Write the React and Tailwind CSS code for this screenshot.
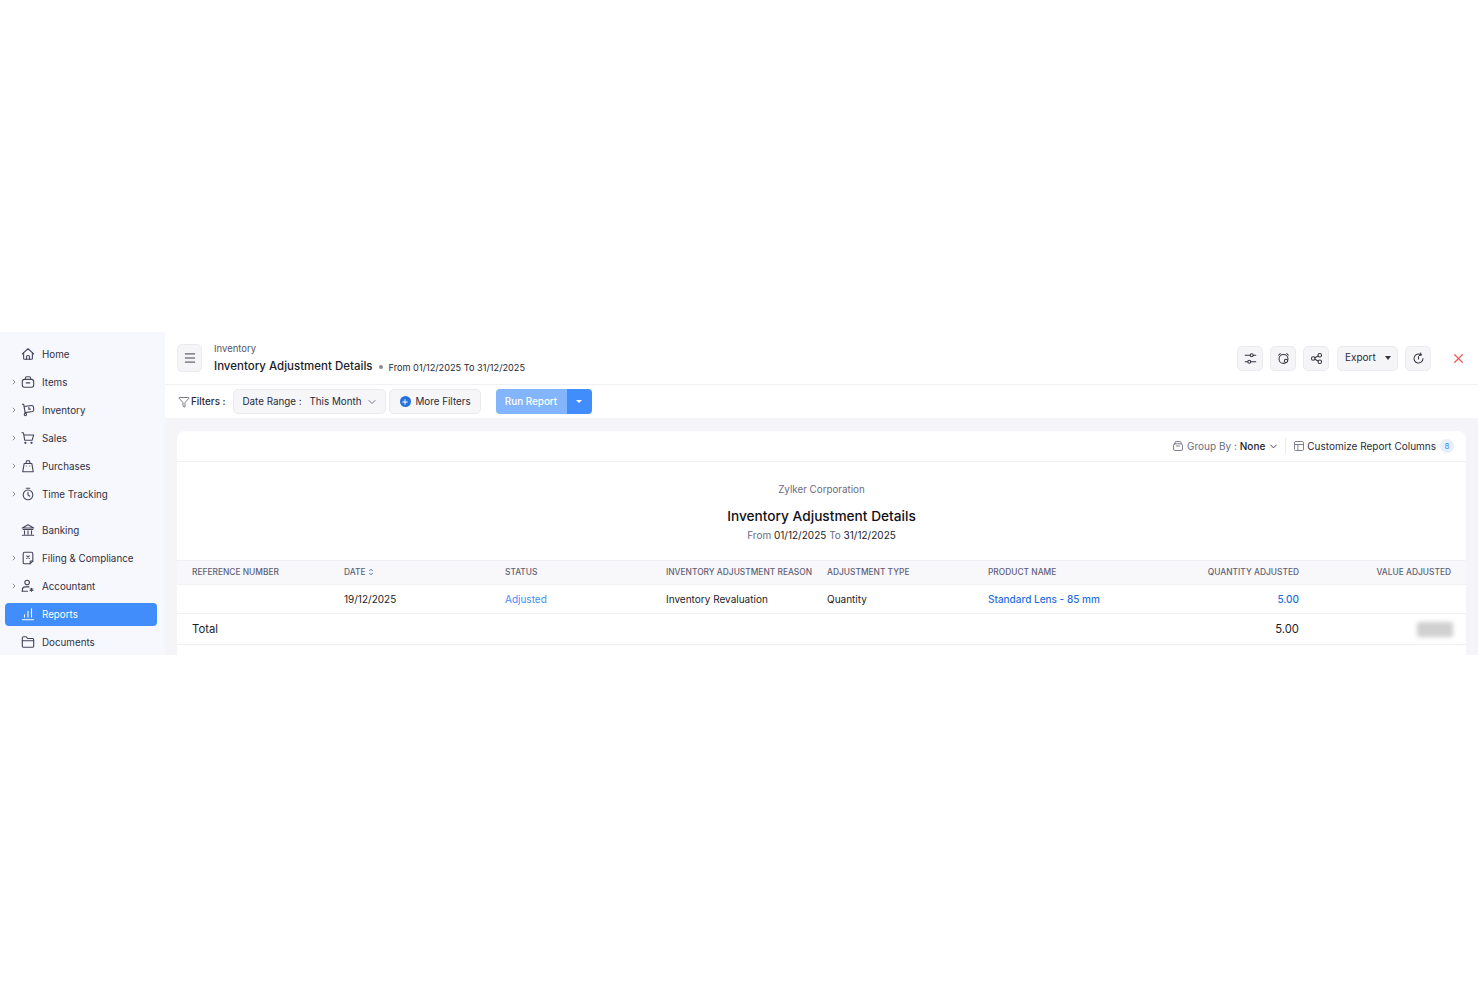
import React from "react";
import { ChevronRight, ChevronDown, Menu, X, Funnel, Plus } from "lucide-react";

const S = ({ children, className = "w-4 h-4", sw = 1.25 }) => (
  <svg viewBox="0 0 16 16" fill="none" stroke="currentColor" strokeWidth={sw} strokeLinecap="round" strokeLinejoin="round" className={className}>
    {children}
  </svg>
);

const icons = {
  home: <><path d="M1.5 7.8 8 2l6.5 5.8" /><path d="M3 6.8V13a1 1 0 0 0 1 1h8a1 1 0 0 0 1-1V6.8" /><path d="M6.3 14v-2.6a1.7 1.7 0 0 1 3.4 0V14" /></>,
  items: <><rect x="1.5" y="5" width="13" height="9" rx="2.5" /><path d="M5 5V3.6A1.6 1.6 0 0 1 6.6 2h2.8A1.6 1.6 0 0 1 11 3.6V5" /><path d="M6 9h4" /></>,
  inventory: <><path d="M1.5 1.5h1.6l1.6 9.5" /><path d="M3.8 4 12 2.8a2 2 0 0 1 2.2 1.7l.4 3a2 2 0 0 1-1.5 2.2L4.7 11" /><circle cx="5" cy="13.2" r="1.3" /><path d="M9 5v2h1.6" /></>,
  sales: <><path d="M1 2h1.8l1.4 8.5h8.6L14.5 4.5H3.3" /><circle cx="5" cy="13.5" r=".7" /><circle cx="12" cy="13.5" r=".7" /></>,
  purchases: <><path d="M3.6 5.2h8.8L14 14.5H2z" /><path d="M5.5 5.2 6.5 2h3l1 3.2" /><path d="M6 8h.01M10 8h.01" /></>,
  time: <><circle cx="8" cy="9" r="5.5" /><path d="M6 1.5h4M8 6v3l2 1.5" /></>,
  banking: <><path d="M1.5 5.8 8 2l6.5 3.8z" /><path d="M2.5 7.5h11M4 9v3.5M8 9v3.5M12 9v3.5M1.5 14h13" /></>,
  filing: <><path d="M10.5 14.5H4a1.5 1.5 0 0 1-1.5-1.5V3A1.5 1.5 0 0 1 4 1.5h8A1.5 1.5 0 0 1 13.5 3v8.5z" /><path d="M10.5 14.5V12a.5.5 0 0 1 .5-.5h2.5" /><path d="m6.5 5.5 3 3M9.5 5.5l-3 3" /></>,
  accountant: <><circle cx="7" cy="4" r="2.6" /><path d="M1.5 14v-1.5A3.5 3.5 0 0 1 5 9h4" /><path d="M1.5 14h6" /><path d="M12 10.5v3.4M10.4 11.3l3.2 1.8M13.6 11.3l-3.2 1.8" /></>,
  reports: <><path d="M1.5 14.5h13M4 11.5V9M8 11.5V5M12 11.5V2" /></>,
  documents: <><path d="M1.5 12.5v-9A1.5 1.5 0 0 1 3 2h3l1.5 2H13a1.5 1.5 0 0 1 1.5 1.5v7A1.5 1.5 0 0 1 13 14H3a1.5 1.5 0 0 1-1.5-1.5z" /><path d="M1.5 6.5h13" /></>,
};

const nav = [
  { label: "Home", icon: "home", h: "h-[27px]" },
  { label: "Items", icon: "items", arrow: true, h: "h-[29px]" },
  { label: "Inventory", icon: "inventory", arrow: true, h: "h-[28px]" },
  { label: "Sales", icon: "sales", arrow: true, h: "h-[28px]" },
  { label: "Purchases", icon: "purchases", arrow: true, h: "h-[28px]" },
  { label: "Time Tracking", icon: "time", arrow: true, h: "h-[28px] mb-2" },
  { label: "Banking", icon: "banking", h: "h-[28px]" },
  { label: "Filing & Compliance", icon: "filing", arrow: true, h: "h-[28px]" },
  { label: "Accountant", icon: "accountant", arrow: true, h: "h-[28px]" },
  { label: "Reports", icon: "reports", active: true, h: "h-[28px]" },
  { label: "Documents", icon: "documents", h: "h-[28px]" },
];

const Sidebar = () => (
  <aside className="w-[165px] shrink-0 bg-[#f7f8fe] pt-[8px] px-[5px] text-[#2f2f3f]">
    {nav.map((n) => (
      <div key={n.label} className={`${n.h} flex items-center`}>
        <div className={`w-[152px] h-[23px] rounded-[4px] flex items-center relative ${n.active ? "bg-[#408dfb] text-white" : ""}`}>
          {n.arrow && <ChevronRight className="absolute left-[5px] w-[8px] h-[8px] text-[#666]" strokeWidth={2.2} />}
          <span className="ml-[16px] w-[21px] flex justify-start">
            <S className={`w-[14px] h-[14px] ${n.active ? "text-white" : "text-[#45455a]"}`}>{icons[n.icon]}</S>
          </span>
          <span className="mt-[3px] text-[9.8px] font-normal whitespace-nowrap">{n.label}</span>
        </div>
      </div>
    ))}
  </aside>
);

const IconBtn = ({ children }) => (
  <button className="w-[26px] h-[25px] rounded-[5px] bg-[#f5f5f7] border border-[#ebebef] flex items-center justify-center text-[#33333f]">
    {children}
  </button>
);

const Header = () => (
  <div className="h-[53px] shrink-0 border-b border-[#f1f1f5] flex items-center pl-3 pr-[12px]">
    <button className="w-[25px] h-[28px] rounded-[5px] bg-[#f5f5f7] border border-[#ebebef] flex items-center justify-center text-[#33333f]">
      <Menu className="w-[14px] h-[14px]" strokeWidth={1.6} />
    </button>
    <div className="ml-3 flex flex-col pt-[2px]">
      <span className="text-[9.5px] leading-[13px] text-[#55556a]">Inventory</span>
      <div className="flex items-center mt-[3px] h-[18px]">
        <span className="text-[11.5px] font-medium text-[#1d1d28] whitespace-nowrap">Inventory Adjustment Details</span>
        <span className="ml-[6px] w-[4px] h-[4px] rounded-full bg-[#8b8b98]" />
        <span className="ml-[6px] text-[9.2px] text-[#2a2a35] mt-[1px] whitespace-nowrap">From 01/12/2025 To 31/12/2025</span>
      </div>
    </div>
    <div className="ml-auto flex items-center">
      <IconBtn>
        <S className="w-[13px] h-[13px]"><path d="M1.5 4h6M11.5 4h3M1.5 12h3M8.5 12h6" /><circle cx="9.5" cy="4" r="1.8" /><circle cx="6.5" cy="12" r="1.8" /></S>
      </IconBtn>
      <span className="w-[7px]" />
      <IconBtn>
        <S className="w-[13px] h-[13px]"><circle cx="8" cy="8.5" r="5.5" /><path d="m2 4 2-2M14 4l-2-2" /><circle cx="11" cy="11" r="2" fill="#f5f5f7" /></S>
      </IconBtn>
      <span className="w-[7px]" />
      <IconBtn>
        <S className="w-[13px] h-[13px]"><circle cx="4" cy="8" r="2.2" /><circle cx="12" cy="4" r="2.2" /><circle cx="12" cy="12" r="2.2" /><path d="m6 7 4-2M6 9l4 2" /></S>
      </IconBtn>
      <span className="w-[8px]" />
      <button className="w-[61px] h-[25px] rounded-[5px] bg-[#f5f5f7] border border-[#ebebef] flex items-center pl-[7px] pb-[1px] text-[10px] text-[#2a2a35]">
        Export
        <span className="ml-[9px] w-0 h-0 border-x-[3px] border-x-transparent border-t-[4px] border-t-[#33333f]" />
      </button>
      <span className="w-[7px]" />
      <IconBtn>
        <S className="w-[13px] h-[13px]"><path d="M13.5 8A5.5 5.5 0 1 1 11 3.4" /><path d="M10.5 1.2 11.5 3.6 9 4.4M8 5.5V8.5" /></S>
      </IconBtn>
      <X className="ml-[20px] w-[15px] h-[15px] text-[#ee5a5a]" strokeWidth={2} />
    </div>
  </div>
);

const Filters = () => (
  <div className="h-[33px] shrink-0 flex items-center pl-[13px] whitespace-nowrap">
    <Funnel className="w-[12px] h-[12px] text-[#33333f]" strokeWidth={1.3} />
    <span className="ml-[1px] mt-[1px] text-[9.8px] font-medium text-[#2a2a35]">Filters :</span>
    <div className="ml-[7px] w-[153px] h-[25px] rounded-[5px] bg-[#f6f6f9] border border-[#ebebef] flex items-center pl-[9px] pt-[1px] text-[9.8px] text-[#2a2a35]">
      <span>Date Range :</span>
      <span className="ml-[8px]">This Month</span>
      <ChevronDown className="ml-[5px] w-[12px] h-[12px] text-[#55556a]" strokeWidth={1.6} />
    </div>
    <div className="ml-[3px] w-[92px] h-[25px] rounded-[5px] bg-[#f6f6f9] border border-[#ebebef] flex items-center pl-[10px] text-[9.8px] text-[#2a2a35]">
      <span className="w-[11px] h-[11px] rounded-full bg-[#2470dc] flex items-center justify-center">
        <Plus className="w-[8px] h-[8px] text-white" strokeWidth={3} />
      </span>
      <span className="ml-[5px] mt-[1px]">More Filters</span>
    </div>
    <div className="ml-[15px] h-[25px] flex rounded-[4px] overflow-hidden text-white">
      <button className="w-[71px] bg-[#82b5fd] text-[9.9px] font-medium">Run Report</button>
      <button className="w-[25px] bg-[#408dfb] flex items-center justify-center">
        <span className="w-0 h-0 border-x-[3px] border-x-transparent border-t-[3px] border-t-white" />
      </button>
    </div>
  </div>
);

const columns = [
  { label: "REFERENCE NUMBER", w: "w-[167px]", pl: "pl-[15px]" },
  { label: "DATE", w: "w-[161px]", sort: true },
  { label: "STATUS", w: "w-[161px]" },
  { label: "INVENTORY ADJUSTMENT REASON", w: "w-[161px]" },
  { label: "ADJUSTMENT TYPE", w: "w-[161px]" },
  { label: "PRODUCT NAME", w: "w-[161px]" },
  { label: "QUANTITY ADJUSTED", w: "w-[150px]", right: true },
  { label: "VALUE ADJUSTED", w: "w-[152px]", right: true },
];

const Cell = ({ w, right, pl, children, className = "" }) => (
  <div className={`${w} ${pl || ""} ${right ? "text-right" : ""} whitespace-nowrap ${className}`}>{children}</div>
);

const Report = () => (
  <div className="mx-3 mt-[13px] bg-white rounded-t-[8px] flex-1">
    <div className="h-[31px] border-b border-[#f1f1f5] flex items-center justify-end pr-[12px] text-[10px] whitespace-nowrap">
      <S className="w-[12px] h-[12px] text-[#77778a]"><rect x="2" y="5" width="12" height="9" rx="2" /><path d="M4 5V3.5A1.5 1.5 0 0 1 5.5 2h5A1.5 1.5 0 0 1 12 3.5V5M6 8h4" /></S>
      <span className="ml-[3px] text-[#6b6b7e]">Group By :</span>
      <span className="ml-[3px] font-medium text-[#1d1d28]">None</span>
      <ChevronDown className="ml-[3px] w-[11px] h-[11px] text-[#33333f]" strokeWidth={2} />
      <span className="ml-[6px] w-px h-[16px] bg-[#ebebef]" />
      <S className="ml-[7px] w-[12px] h-[12px] text-[#77778a]"><rect x="2" y="2" width="12" height="12" rx="1.5" /><path d="M2 6h12M6.5 6v8" /></S>
      <span className="ml-[2px] text-[#2a2a35]">Customize Report Columns</span>
      <span className="ml-[4px] w-[14px] h-[14px] rounded-full bg-[#e5effe] text-[#408dfb] text-[8px] flex items-center justify-center">8</span>
    </div>
    <div className="h-[98px] flex flex-col items-center">
      <span className="mt-[21px] text-[9.8px] leading-[14px] text-[#6b6b7e]">Zylker Corporation</span>
      <span className="mt-[9px] text-[13.7px] leading-[20px] font-medium text-[#111118]">Inventory Adjustment Details</span>
      <span className="mt-[2px] text-[10px] leading-[15px] text-[#6b6b7e]">
        From <span className="text-[#1d1d28]">01/12/2025</span> To <span className="text-[#1d1d28]">31/12/2025</span>
      </span>
    </div>
    <div className="h-[25px] bg-[#f8f8fb] border-y border-[#f1f1f5] flex items-center text-[8.4px] font-medium text-[#5f5f75]">
      {columns.map((c) => (
        <Cell key={c.label} {...c}>
          <span className="inline-flex items-center">
            {c.label}
            {c.sort && (
              <svg viewBox="0 0 8 10" fill="none" stroke="#4a6fb5" strokeWidth="1.2" className="ml-[3px] w-[6px] h-[8px]">
                <path d="m1.5 3.5 2.5-2 2.5 2M1.5 6.5l2.5 2 2.5-2" />
              </svg>
            )}
          </span>
        </Cell>
      ))}
    </div>
    <div className="h-[29px] pt-[1px] border-b border-[#f1f1f5] flex items-center text-[10px] text-[#1d1d28]">
      <Cell {...columns[0]} />
      <Cell {...columns[1]}>19/12/2025</Cell>
      <Cell {...columns[2]} className="text-[#408dfb]">Adjusted</Cell>
      <Cell {...columns[3]}>Inventory Revaluation</Cell>
      <Cell {...columns[4]}>Quantity</Cell>
      <Cell {...columns[5]} className="text-[#1f6fe0] font-medium">Standard Lens - 85 mm</Cell>
      <Cell {...columns[6]} className="text-[#1f6fe0] font-medium">5.00</Cell>
      <Cell {...columns[7]} />
    </div>
    <div className="h-[31px] border-b border-[#f1f1f5] flex items-center text-[11.3px] text-[#1d1d28]">
      <Cell {...columns[0]}>Total</Cell>
      <Cell w="w-[805px]" />
      <Cell {...columns[6]}>5.00</Cell>
      <div className="w-[152px] flex justify-end">
        <span className="mr-[-2px] w-[36px] h-[15px] rounded-[2px] bg-[#d0d0d0] blur-[2px]" />
      </div>
    </div>
  </div>
);

export default function App() {
  return (
    <div className="h-[987px] bg-white pt-[332px] font-['Inter',sans-serif]">
      <div className="w-[1478px] h-[323px] flex overflow-hidden">
        <Sidebar />
        <main className="flex-1 flex flex-col bg-white">
          <Header />
          <Filters />
          <div className="flex-1 flex flex-col bg-[#f4f4f9]">
            <Report />
          </div>
        </main>
      </div>
    </div>
  );
}
